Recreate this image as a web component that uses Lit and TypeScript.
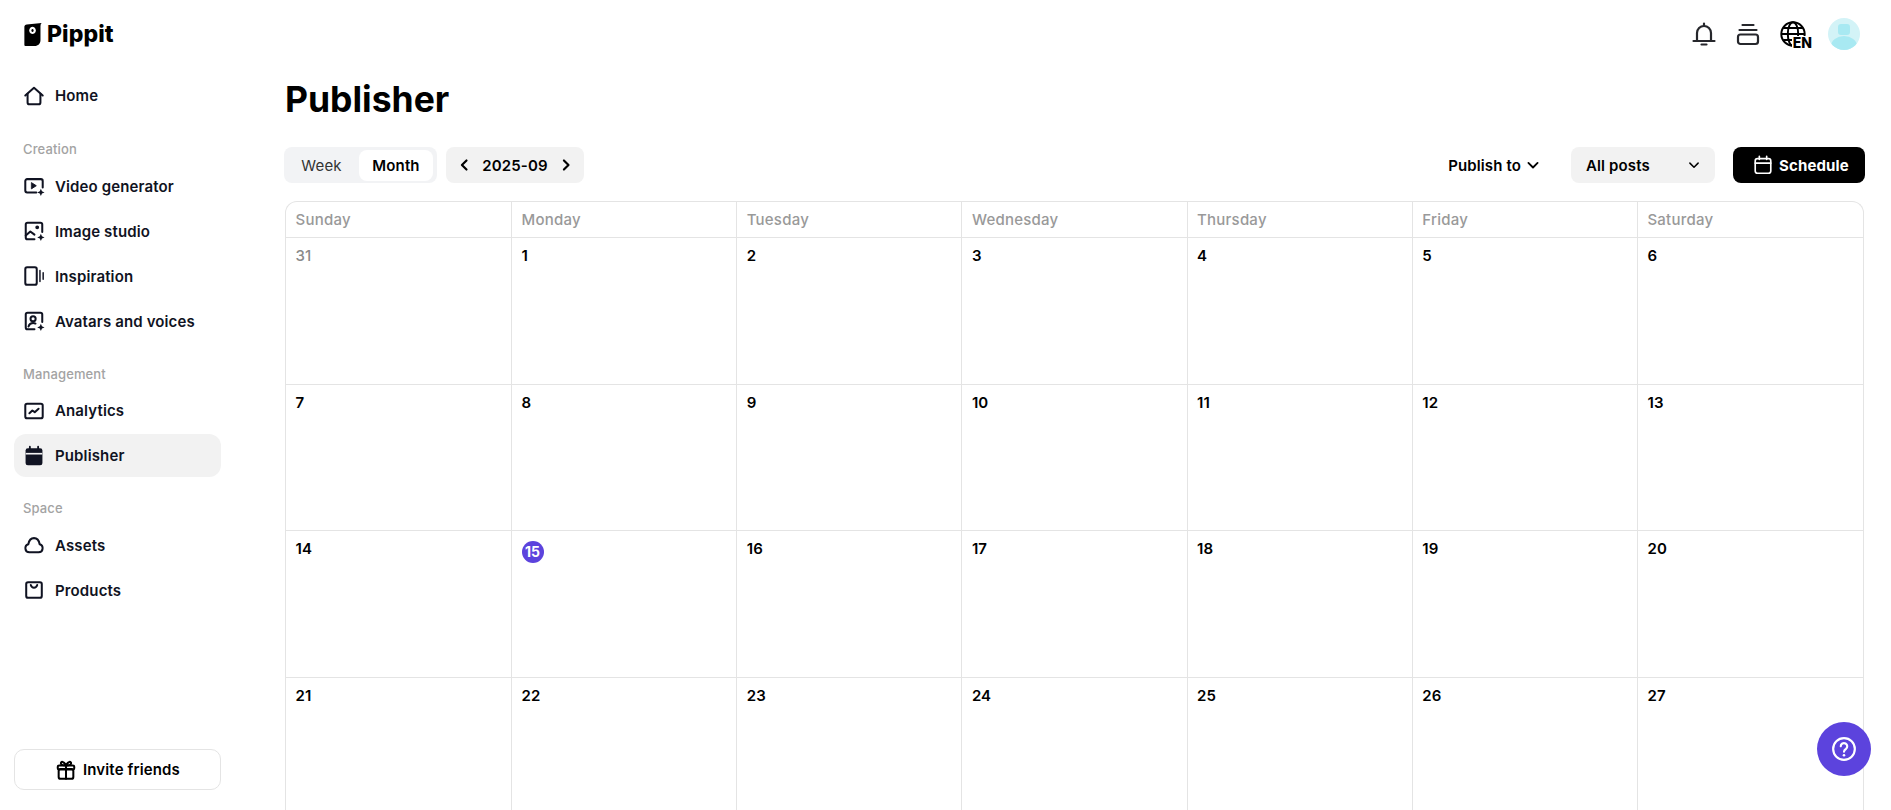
import { LitElement, css, html, svg } from 'lit';
import { customElement } from 'lit/decorators.js';
import { classMap } from 'lit/directives/class-map.js';

const icon = (body: unknown, size = 22, stroke = 2.2) => html`
  <svg width=${size} height=${size} viewBox="0 0 24 24" fill="none" stroke="currentColor"
    stroke-width=${stroke} stroke-linecap="round" stroke-linejoin="round">${body}</svg>
`;

const spark = svg`<path d="M19.500 15l1.200 2.800 2.800 1.200-2.800 1.200-1.200 2.800-1.200-2.800-2.800-1.200 2.800-1.200z" fill="currentColor" stroke="none"/>`;

const icons = {
  home: svg`<path d="M2.500 11.500L12 3l9.500 8.500"/><path d="M5 9.500V19a2 2 0 0 0 2 2h10a2 2 0 0 0 2-2V9.500"/>`,
  video: svg`<path d="M14.500 19H4.500a2 2 0 0 1-2-2V6.500a2 2 0 0 1 2-2h15a2 2 0 0 1 2 2v7"/><path d="M9.500 8.500l5 3.200-5 3.200z" fill="currentColor" stroke-width="1"/>${spark}`,
  image: svg`<path d="M12.500 21H5a2 2 0 0 1-2-2V5a2 2 0 0 1 2-2h14a2 2 0 0 1 2 2v8"/><path d="M3 17l5-4.500 4.500 3.500"/><circle cx="15.500" cy="8" r="1" fill="currentColor"/>${spark}`,
  inspiration: svg`<rect x="2.500" y="2.500" width="12.500" height="19" rx="2"/><path d="M18.500 6v12M22 8.500v7" stroke-width="1.600"/>`,
  avatar: svg`<path d="M12.500 21H5a2 2 0 0 1-2-2V5a2 2 0 0 1 2-2h14a2 2 0 0 1 2 2v8"/><circle cx="11" cy="9.500" r="2.800"/><path d="M6 18c.8-2.600 2.600-3.800 5-3.800 1 0 1.900.2 2.600.6"/>${spark}`,
  analytics: svg`<rect x="2.500" y="4" width="19" height="16" rx="2"/><path d="M7 14.500l3.200-3 2.600 1.800 4.200-3.800"/>`,
  cloud: svg`<path d="M7 20a4.500 4.500 0 0 1-1.200-8.800C6.500 7.300 9 4.500 12 4.500s5.500 2.800 6.200 6.700A4.500 4.500 0 0 1 17 20z"/>`,
  products: svg`<rect x="3.500" y="3.500" width="17" height="17" rx="2"/><path d="M8.500 6.500c.6 2 2 3 3.500 3s2.900-1 3.500-3"/>`,
  gift: svg`<rect x="4" y="11" width="16" height="10.500" rx="2"/><rect x="3" y="7" width="18" height="4.500" rx="1.500"/><path d="M12 7v14.500M12 7C10 2.500 6 2 6.500 5c.2 1.300 2 2 5.500 2zM12 7c2-4.500 6-5 5.500-2-.2 1.300-2 2-5.500 2z"/>`,
  calendar: svg`<rect x="3.500" y="5" width="17" height="16" rx="2.500"/><path d="M3.500 10h17M8 2.500V6M16 2.500V6"/>`,
  bell: svg`<path d="M5 19v-8a7 7 0 0 1 14 0v8"/><path d="M1.500 19h21M9.500 22.500h5M12 1.500v2.500"/>`,
  card: svg`<rect x="2" y="12.500" width="20" height="9.500" rx="2.500"/><path d="M3.500 8h17M6.500 3h11"/>`,
  chevronDown: svg`<path d="M6.500 9.500l5.500 5.500 5.500-5.500"/>`,
  chevronLeft: svg`<path d="M15 6.500L9.500 12l5.500 5.500"/>`,
  chevronRight: svg`<path d="M9.500 6.500L15 12l-5.500 5.500"/>`,
};

const publisherIcon = svg`
  <rect x="2.800" y="3.500" width="18.400" height="18.500" rx="2.500" fill="currentColor" stroke="none"/>
  <path d="M7.500 1.800v3.500M16.500 1.800v3.500" stroke-width="2"/>
  <path d="M3 9.500h18" stroke="#f2f2f2" stroke-width="1.800" stroke-linecap="butt"/>
`;

const navGroups = [
  { items: [{ label: 'Home', icon: icons.home }] },
  {
    title: 'Creation',
    items: [
      { label: 'Video generator', icon: icons.video },
      { label: 'Image studio', icon: icons.image },
      { label: 'Inspiration', icon: icons.inspiration },
      { label: 'Avatars and voices', icon: icons.avatar },
    ],
  },
  {
    title: 'Management',
    items: [
      { label: 'Analytics', icon: icons.analytics },
      { label: 'Publisher', icon: publisherIcon, active: true },
    ],
  },
  {
    title: 'Space',
    items: [
      { label: 'Assets', icon: icons.cloud },
      { label: 'Products', icon: icons.products },
    ],
  },
];

const weekdays = ['Sunday', 'Monday', 'Tuesday', 'Wednesday', 'Thursday', 'Friday', 'Saturday'];
const days = [31, ...Array.from({ length: 27 }, (_, i) => i + 1)];

@customElement('app-root')
export class AppRoot extends LitElement {
  static styles = css`
    :host {
      display: grid;
      grid-template-columns: 221px 1fr;
      height: 810px;
      overflow: hidden;
      position: relative;
      background: #fff;
      color: #000;
      font-family: Inter, 'Liberation Sans', sans-serif;
      letter-spacing: 0.13px;
    }

    svg {
      display: block;
      flex: none;
    }

    .sidebar {
      display: flex;
      flex-direction: column;
      height: 810px;
      box-sizing: border-box;
      padding: 0 0 20px 14px;
    }

    .logo {
      display: flex;
      align-items: center;
      gap: 5px;
      height: 68px;
      margin-bottom: 6px;
      padding-left: 10px;
      font-size: 23px;
      font-weight: 800;
      letter-spacing: 0.1px;
    }

    .group {
      display: flex;
      flex-direction: column;
      gap: 2px;
      margin-bottom: 18px;
    }

    .logo + .group {
      margin-bottom: 19px;
    }

    .group-title {
      height: 24px;
      line-height: 26px;
      margin-bottom: 2.500px;
      padding-left: 9px;
      font-size: 13px;
      font-weight: 500;
      color: #a3a3a3;
    }

    .nav-item {
      display: flex;
      align-items: center;
      gap: 10px;
      height: 43px;
      padding-left: 9px;
      border-radius: 12px;
      font-size: 15px;
      font-weight: 600;
      color: #101322;
    }

    .nav-item--active {
      background: #f2f2f2;
    }

    .invite {
      display: flex;
      align-items: center;
      justify-content: center;
      gap: 6px;
      height: 41px;
      margin-top: auto;
      border: 1px solid #e4e4e4;
      border-radius: 10px;
      box-sizing: border-box;
      font-size: 15px;
      font-weight: 600;
    }

    .main {
      min-width: 0;
      padding: 0 26px 0 64px;
    }

    .topbar {
      display: flex;
      justify-content: flex-end;
      align-items: center;
      gap: 20px;
      height: 68px;
      padding-right: 5px;
      color: #26272c;
    }

    .globe {
      position: relative;
      width: 32px;
      height: 26px;
      margin-right: -4px;
      color: #000;
    }

    .globe span {
      position: absolute;
      right: 0;
      bottom: -2px;
      padding-left: 1px;
      background: #fff;
      font-size: 14px;
      line-height: 13px;
      font-weight: 800;
      letter-spacing: 0;
    }

    .avatar {
      position: relative;
      width: 32px;
      height: 32px;
      border-radius: 50%;
      background: #d3f3f7;
      overflow: hidden;
    }

    .avatar i {
      position: absolute;
      background: #a8e9f2;
    }

    .avatar .head {
      left: 10px;
      top: 6px;
      width: 12px;
      height: 11px;
      border-radius: 3px;
    }

    .avatar .body {
      left: 3px;
      top: 18px;
      width: 26px;
      height: 20px;
      border-radius: 50%;
    }

    h1 {
      margin: 0;
      height: 61px;
      line-height: 64px;
      font-size: 35.500px;
      font-weight: 700;
      letter-spacing: 0;
    }

    .toolbar {
      display: flex;
      align-items: center;
      height: 36px;
      margin: 18px 0;
      font-size: 15px;
      font-weight: 600;
    }

    .segment {
      display: flex;
      align-items: center;
      width: 153px;
      height: 36px;
      box-sizing: border-box;
      padding: 3px 4px 3px 0;
      margin-left: -1px;
      border-radius: 8px;
      background: #f2f3f5;
    }

    .segment span {
      flex: 1;
      text-align: center;
      font-weight: 400;
      color: #333;
    }

    .segment .selected {
      flex: none;
      width: 74px;
      line-height: 31px;
      border-radius: 8px;
      background: #fff;
      font-weight: 600;
      color: #000;
    }

    .date {
      display: flex;
      align-items: center;
      justify-content: space-between;
      width: 138px;
      height: 36px;
      box-sizing: border-box;
      margin-left: 9px;
      padding: 0 8px;
      border-radius: 8px;
      background: #f2f2f2;
    }

    .publish {
      display: flex;
      align-items: center;
      gap: 2px;
      margin-left: auto;
      margin-right: 28px;
    }

    .select {
      display: flex;
      align-items: center;
      justify-content: space-between;
      width: 144px;
      height: 36px;
      box-sizing: border-box;
      margin-right: 18px;
      padding: 0 12.500px 0 15px;
      border-radius: 8px;
      background: #f2f2f2;
    }

    .schedule {
      display: flex;
      align-items: center;
      gap: 5px;
      width: 132px;
      height: 36px;
      box-sizing: border-box;
      padding-left: 19px;
      border-radius: 8px;
      background: #000;
      color: #fff;
      font-weight: 700;
    }

    .calendar {
      display: grid;
      grid-template-columns: 225px repeat(5, 225.200px) 1fr;
      margin-right: 1px;
      border: 1px solid #e4e4e4;
      border-bottom: 0;
      border-radius: 12px 12px 0 0;
    }

    .weekday {
      height: 35px;
      line-height: 35px;
      padding-left: 9.500px;
      border-bottom: 1px solid #e4e4e4;
      border-left: 1px solid #e4e4e4;
      font-size: 15px;
      font-weight: 500;
      letter-spacing: 0.22px;
      color: #999;
    }

    .cell {
      height: 146.500px;
      padding: 8px 0 0 9.500px;
      box-sizing: border-box;
      border-bottom: 1px solid #e4e4e4;
      border-left: 1px solid #e4e4e4;
      font-size: 15px;
      line-height: 20px;
      font-weight: 600;
    }

    .weekday:nth-child(7n + 1),
    .cell:nth-child(7n + 1) {
      border-left: 0;
    }

    .cell--muted {
      color: #8a8a8a;
      font-weight: 500;
    }

    .today {
      display: block;
      width: 22px;
      height: 22px;
      margin-top: 2px;
      border-radius: 50%;
      background: #5c43dd;
      color: #fff;
      text-align: center;
      line-height: 22px;
      font-size: 14px;
      font-weight: 700;
      letter-spacing: 0;
    }

    .help {
      position: absolute;
      left: 1817px;
      top: 722px;
      display: flex;
      align-items: center;
      justify-content: center;
      width: 54px;
      height: 54px;
      border-radius: 50%;
      background: #5c43dd;
      color: #fff;
    }
  `;

  render() {
    return html`
      <aside class="sidebar">
        <div class="logo">
          <svg width="18" height="23" viewBox="0 0 18 24">
            <path fill-rule="evenodd" fill="#000" d="M2.500 1.500L18 0c-.8 1-1.200 1.800-1.200 3v15c0 3.500-2.500 6-6 6H1c-.6 0-1-.4-1-1V4c0-1.400 1-2.400 2.500-2.500zM8.500 4a3.500 3.800 0 1 0 .01 0zM8.500 6.200a1.200 1.600 0 1 1-.01 0z"/>
          </svg>
          <span>Pippit</span>
        </div>
        ${navGroups.map(
          (group) => html`
            <div class="group">
              ${group.title ? html`<div class="group-title">${group.title}</div>` : ''}
              ${group.items.map(
                (item) => html`
                  <div class=${classMap({ 'nav-item': true, 'nav-item--active': !!item.active })}>
                    ${icon(item.icon)}<span>${item.label}</span>
                  </div>
                `
              )}
            </div>
          `
        )}
        <div class="invite">${icon(icons.gift)}<span>Invite friends</span></div>
      </aside>

      <main class="main">
        <div class="topbar">
          ${icon(icons.bell, 24, 2.200)}
          ${icon(icons.card, 24, 2.200)}
          <div class="globe">
            <svg width="26" height="26" viewBox="0 0 24 24" fill="none" stroke="currentColor" stroke-width="1.800">
              <circle cx="12" cy="12" r="10.800"/>
              <ellipse cx="12" cy="12" rx="4.800" ry="10.800"/>
              <path d="M1.500 12h21M3 6.500h18M3 17.500h18"/>
            </svg>
            <span>EN</span>
          </div>
          <div class="avatar"><i class="head"></i><i class="body"></i></div>
        </div>

        <h1>Publisher</h1>

        <div class="toolbar">
          <div class="segment"><span>Week</span><span class="selected">Month</span></div>
          <div class="date">${icon(icons.chevronLeft, 20, 2.600)}<span>2025-09</span>${icon(icons.chevronRight, 20, 2.600)}</div>
          <div class="publish"><span>Publish to</span>${icon(icons.chevronDown, 20, 2.200)}</div>
          <div class="select"><span>All posts</span>${icon(icons.chevronDown, 18, 2)}</div>
          <div class="schedule">${icon(icons.calendar, 22, 1.800)}<span>Schedule</span></div>
        </div>

        <div class="calendar">
          ${weekdays.map((day) => html`<div class="weekday">${day}</div>`)}
          ${days.map(
            (day, i) => html`
              <div class=${classMap({ cell: true, 'cell--muted': i === 0 })}>
                ${day === 15 ? html`<span class="today">15</span>` : day}
              </div>
            `
          )}
        </div>
      </main>

      <div class="help">
        <svg width="26" height="26" viewBox="0 0 24 24" fill="none" stroke="currentColor" stroke-width="2" stroke-linecap="round">
          <circle cx="12" cy="12" r="10"/>
          <path d="M9 9.500a3 3 0 1 1 4.700 2.500c-1.100.7-1.700 1.300-1.700 2.500"/>
          <path d="M12 17.800v.01" stroke-width="2.400"/>
        </svg>
      </div>
    `;
  }
}
